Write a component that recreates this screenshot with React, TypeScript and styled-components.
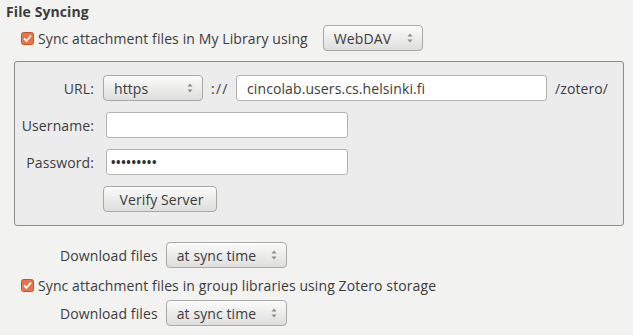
import React from "react";
import styled, { createGlobalStyle } from "styled-components";

const GlobalStyle = createGlobalStyle`
  html, body {
    margin: 0;
    padding: 0;
    background: #f2f2f1;
  }
  body {
    font-family: "Open Sans", "DejaVu Sans", sans-serif;
    font-size: 14px;
    letter-spacing: 0.1px;
    color: #3c3c3c;
  }
`;

const Page = styled.div`
  width: 633px;
  height: 335px;
  padding: 3px 9px 0 6px;
  box-sizing: border-box;
  display: flex;
  flex-direction: column;
`;

const Title = styled.div`
  font-weight: 700;
  font-size: 14px;
  line-height: 18px;
`;

const Row = styled.div<{ $indent?: number; $mt?: number }>`
  display: flex;
  align-items: center;
  gap: 8px;
  height: 26px;
  margin-left: ${({ $indent }) => $indent ?? 0}px;
  margin-top: ${({ $mt }) => $mt ?? 0}px;
`;

const CheckLabel = styled.label`
  display: flex;
  align-items: center;
  gap: 4px;
  white-space: nowrap;
  margin-right: 7px;
`;

const Label = styled.span<{ $width?: number }>`
  white-space: nowrap;
  text-align: right;
  width: ${({ $width }) => ($width ? `${$width}px` : "auto")};
`;

const Separator = styled.span`
  width: 17px;
  letter-spacing: 1.2px;
  white-space: nowrap;
`;

const SelectBox = styled.div<{ $width: number }>`
  width: ${({ $width }) => $width}px;
  height: 26px;
  box-sizing: border-box;
  border: 1px solid #a9a9a7;
  border-radius: 4px;
  background: linear-gradient(#fbfbfb, #ebebea 55%, #dededd);
  box-shadow: inset 0 1px 0 #ffffff;
  display: flex;
  align-items: center;
  justify-content: space-between;
  padding: 0 9px 0 10px;
  white-space: nowrap;
  color: #3c3c3c;
`;

const Group = styled.div`
  margin: 10px 0 0 8px;
  width: 610px;
  height: 165px;
  box-sizing: border-box;
  border: 1px solid #8c8c8a;
  border-radius: 3px;
  background: #edecec;
  padding: 13px 0 0 5px;
  display: grid;
  grid-template-columns: 74px auto;
  column-gap: 9px;
  row-gap: 11px;
  align-items: center;
  align-content: start;
`;

const Field = styled.div`
  display: flex;
  align-items: center;
  gap: 8px;
`;

const TextInput = styled.div<{ $width: number; $shift?: number }>`
  width: ${({ $width }) => $width}px;
  height: 26px;
  box-sizing: border-box;
  margin-left: ${({ $shift }) => $shift ?? 0}px;
  border: 1px solid #b3b3b1;
  border-radius: 3px;
  background: #ffffff;
  display: flex;
  align-items: center;
  padding: 0 10px;
  white-space: nowrap;
`;

const Dots = styled.span`
  margin-left: -6px;
  font-size: 12px;
  font-weight: 700;
  letter-spacing: 0.6px;
  color: #2e2e2e;
`;

const Button = styled.div`
  width: 114px;
  height: 26px;
  box-sizing: border-box;
  border: 1px solid #a9a9a7;
  border-radius: 4px;
  background: linear-gradient(#fbfbfb, #ebebea 55%, #dededd);
  display: flex;
  align-items: center;
  justify-content: center;
  padding-left: 3px;
`;

const Arrows = () => (
  <svg width="6" height="10" viewBox="0 0 6 10">
    <path d="M3 0.5 L5.5 3.5 L0.5 3.5 Z" fill="#8a8a88" />
    <path d="M3 9.5 L5.5 6.5 L0.5 6.5 Z" fill="#8a8a88" />
  </svg>
);

const Select = ({ value, width }: { value: string; width: number }) => (
  <SelectBox $width={width}>
    <span>{value}</span>
    <Arrows />
  </SelectBox>
);

const Checkbox = () => (
  <svg width="13" height="13" viewBox="0 0 13 13">
    <rect x="0.5" y="0.5" width="12" height="12" rx="2" fill="#e8754a" stroke="#c1532e" />
    <path d="M3 6.5 L5.5 9 L10 3.5" fill="none" stroke="#ffffff" strokeWidth="1.8" />
  </svg>
);

export default function App() {
  return (
    <Page>
      <GlobalStyle />
      <Title>File Syncing</Title>
      <Row $indent={15} $mt={4}>
        <CheckLabel>
          <Checkbox />
          Sync attachment files in My Library using
        </CheckLabel>
        <Select value="WebDAV" width={100} />
      </Row>
      <Group>
        <Label $width={74}>URL:</Label>
        <Field>
          <Select value="https" width={100} />
          <Separator>://</Separator>
          <TextInput $width={311}>cincolab.users.cs.helsinki.fi</TextInput>
          <span>/zotero/</span>
        </Field>
        <Label $width={74}>Username:</Label>
        <TextInput $width={242} $shift={3} />
        <Label $width={74}>Password:</Label>
        <TextInput $width={242} $shift={3}>
          <Dots>•••••••••</Dots>
        </TextInput>
        <span />
        <Button>Verify Server</Button>
      </Group>
      <Row $indent={54} $mt={16}>
        <Label>Download files</Label>
        <Select value="at sync time" width={121} />
      </Row>
      <Row $indent={15} $mt={4}>
        <CheckLabel>
          <Checkbox />
          Sync attachment files in group libraries using Zotero storage
        </CheckLabel>
      </Row>
      <Row $indent={54} $mt={2}>
        <Label>Download files</Label>
        <Select value="at sync time" width={121} />
      </Row>
    </Page>
  );
}
